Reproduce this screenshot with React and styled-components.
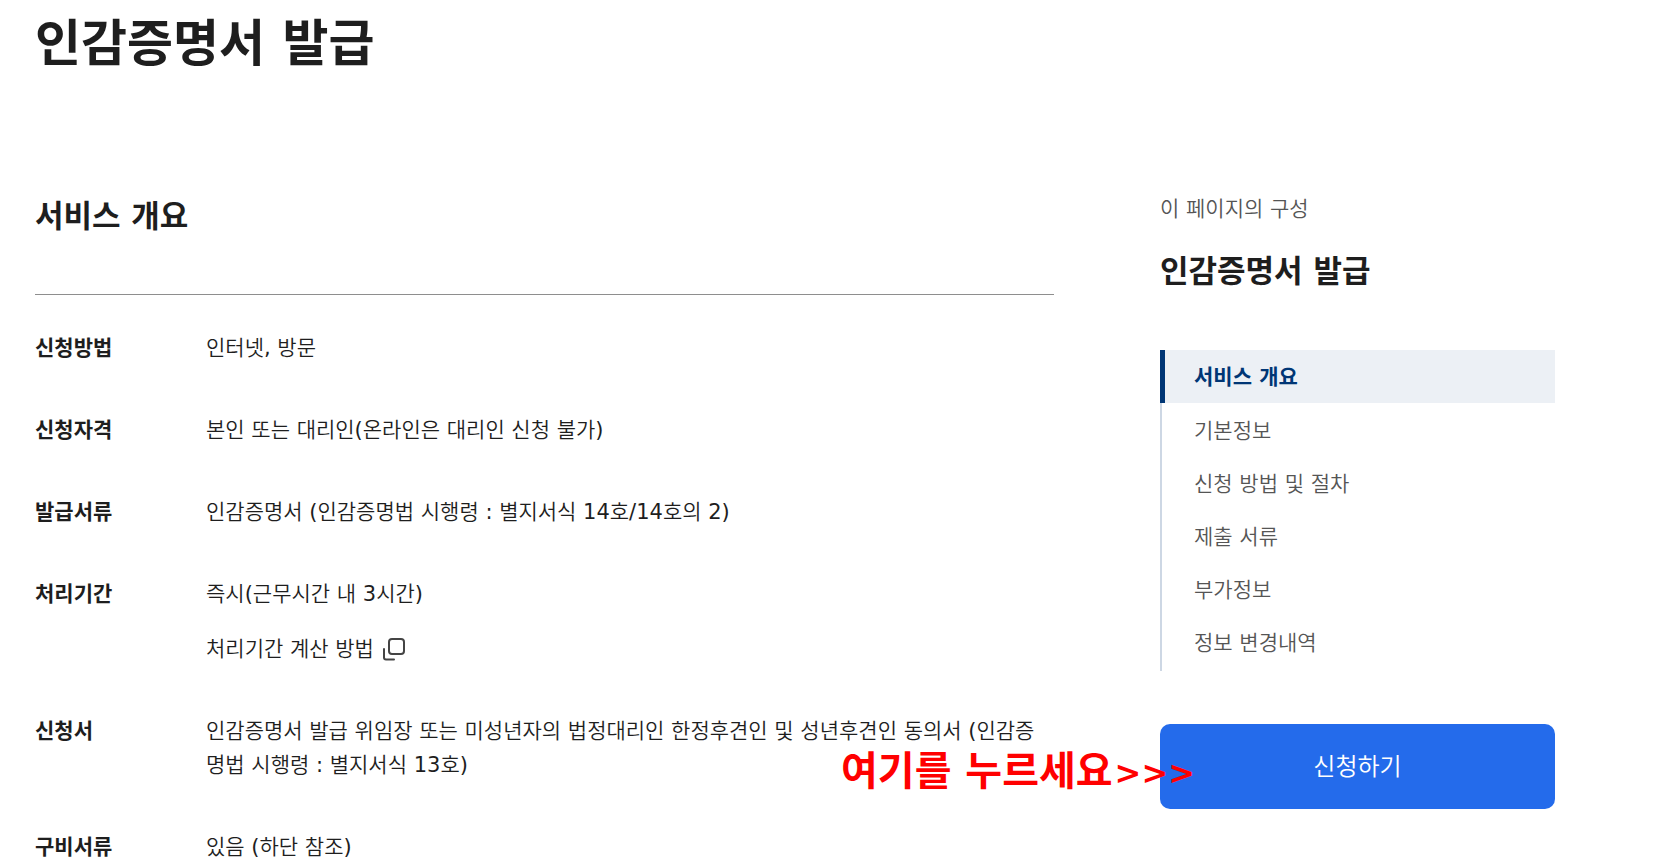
import React from 'react';
import styled, { createGlobalStyle } from 'styled-components';

const boldFont = '"DejaVu Sans", "Noto Sans CJK KR", sans-serif';
const bodyFont = '"DejaVu Sans", "Noto Sans CJK KR DemiLight", "Noto Sans CJK KR", sans-serif';

const Global = createGlobalStyle`
  * { box-sizing: border-box; }
  body {
    margin: 0;
    background: #fff;
    color: #1e1e1e;
    font-family: ${bodyFont};
    font-weight: 400;
  }
  h1, h2, h3, p, dl, dd, dt, ul { margin: 0; padding: 0; }
  h1, h2, h3, dt { font-family: ${boldFont}; font-weight: 700; }
`;

const Page = styled.div`
  padding: 8px 102px 0 35px;
`;
const Title = styled.h1`
  font-size: 50px;
  line-height: 72px;
`;
const Columns = styled.div`
  display: flex;
  justify-content: space-between;
  gap: 106px;
  margin-top: 104px;
`;
const Main = styled.main`
  flex: 1;
  min-width: 0;
`;
const SectionTitle = styled.h2`
  font-size: 31px;
  line-height: 48px;
  padding: 8px 0 54px;
  border-bottom: 1px solid #8e8e8e;
`;
const Facts = styled.dl`
  display: flex;
  flex-direction: column;
  gap: 48px;
  padding-top: 36px;
`;
const Fact = styled.div`
  display: grid;
  grid-template-columns: 171px 1fr;
  font-size: 21px;
  line-height: 34px;
`;
const Term = styled.dt``;
const Detail = styled.dd`
  min-width: 0;
  padding-right: 10px;
`;
const PopupButton = styled.button`
  display: flex;
  align-items: center;
  gap: 8px;
  margin-top: 21px;
  padding: 0;
  border: 0;
  background: none;
  font: inherit;
  color: inherit;
  cursor: pointer;
`;
const Aside = styled.aside`
  width: 395px;
  flex: none;
`;
const AsideLabel = styled.p`
  font-size: 21px;
  line-height: 34px;
  color: #555;
  padding-top: 8px;
`;
const AsideTitle = styled.h3`
  font-size: 31px;
  line-height: 48px;
  margin-top: 21px;
`;
const Nav = styled.ul`
  list-style: none;
  margin-top: 55px;
  padding-bottom: 2px;
  background: linear-gradient(#cdd7e4, #cdd7e4) left / 2px 100% no-repeat;

  li:first-child { margin-bottom: 1px; }
`;
const NavLink = styled.a`
  display: block;
  padding-top: 2px;
  padding-left: ${(p) => (p.$active ? 29 : 34)}px;
  border-left: ${(p) => (p.$active ? '5px solid #003675' : '0')};
  background: ${(p) => (p.$active ? '#ecf0f5' : 'none')};
  color: ${(p) => (p.$active ? '#003675' : '#555')};
  font-family: ${(p) => (p.$active ? boldFont : bodyFont)};
  font-weight: ${(p) => (p.$active ? 700 : 400)};
  font-size: 21px;
  line-height: 51px;
  text-decoration: none;
`;
const ApplyArea = styled.div`
  position: relative;
  margin-top: 53px;
`;
const Apply = styled.button`
  display: block;
  width: 100%;
  height: 85px;
  padding: 0 0 4px;
  border: 0;
  border-radius: 10px;
  background: #246beb;
  color: #fff;
  font: inherit;
  font-size: 24px;
  cursor: pointer;
`;
const Callout = styled.p`
  position: absolute;
  right: 360px;
  top: 15px;
  display: flex;
  align-items: center;
  gap: 2px;
  color: #f00;
  font-family: ${boldFont};
  font-size: 40px;
  line-height: 60px;
  font-weight: 700;
  white-space: nowrap;
  pointer-events: none;
`;
const Arrows = styled.span`
  padding-top: 4px;
  font-size: 32px;
`;

const PopupIcon = () => (
  <svg width="24" height="24" viewBox="0 0 24 24" fill="none" stroke="#444" strokeWidth="2" strokeLinecap="round" aria-hidden="true">
    <rect x="7" y="2" width="15" height="15" rx="3" />
    <path d="M2 12v8.500q0 2 2 2h8" />
  </svg>
);

const facts = [
  ['신청방법', '인터넷, 방문'],
  ['신청자격', '본인 또는 대리인(온라인은 대리인 신청 불가)'],
  ['발급서류', '인감증명서 (인감증명법 시행령 : 별지서식 14호/14호의 2)'],
  ['처리기간', '즉시(근무시간 내 3시간)', '처리기간 계산 방법'],
  ['신청서', '인감증명서 발급 위임장 또는 미성년자의 법정대리인 한정후견인 및 성년후견인 동의서 (인감증명법 시행령 : 별지서식 13호)'],
  ['구비서류', '있음 (하단 참조)'],
];
const links = ['서비스 개요', '기본정보', '신청 방법 및 절차', '제출 서류', '부가정보', '정보 변경내역'];

export default function App() {
  return (
    <>
      <Global />
      <Page lang="ko">
        <Title>인감증명서 발급</Title>
        <Columns>
          <Main>
            <SectionTitle>서비스 개요</SectionTitle>
            <Facts>
              {facts.map(([term, detail, popup]) => (
                <Fact key={term}>
                  <Term>{term}</Term>
                  <Detail>
                    {detail}
                    {popup && (
                      <PopupButton type="button">
                        {popup}
                        <PopupIcon />
                      </PopupButton>
                    )}
                  </Detail>
                </Fact>
              ))}
            </Facts>
          </Main>
          <Aside>
            <AsideLabel>이 페이지의 구성</AsideLabel>
            <AsideTitle>인감증명서 발급</AsideTitle>
            <nav>
              <Nav>
                {links.map((label, i) => (
                  <li key={label}>
                    <NavLink href="#" $active={i === 0}>{label}</NavLink>
                  </li>
                ))}
              </Nav>
            </nav>
            <ApplyArea>
              <Apply type="button">신청하기</Apply>
              <Callout>
                여기를 누르세요<Arrows>&gt;&gt;&gt;</Arrows>
              </Callout>
            </ApplyArea>
          </Aside>
        </Columns>
      </Page>
    </>
  );
}
